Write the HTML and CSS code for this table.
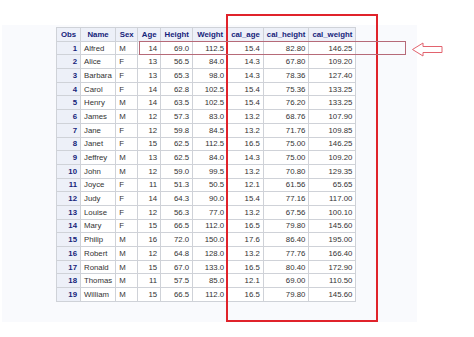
FILE: index.html
```html
<!DOCTYPE html>
<html lang="en">
<head>
  <meta charset="UTF-8">
  <title>SAS Output - Class</title>
  <link rel="stylesheet" href="styles.css">
</head>
<body>
  <div class="panel">
    <table class="sas-table">
      <thead>
        <tr>
          <th class="c-obs">Obs</th>
          <th class="c-name">Name</th>
          <th class="c-sex">Sex</th>
          <th class="c-age">Age</th>
          <th class="c-height">Height</th>
          <th class="c-weight">Weight</th>
          <th class="c-cage">cal_age</th>
          <th class="c-cheight">cal_height</th>
          <th class="c-cweight">cal_weight</th>
        </tr>
      </thead>
      <tbody id="rows"></tbody>
    </table>
  </div>

  <div class="red-box"></div>
  <div class="row-mark"></div>
  <svg class="arrow" width="34" height="18" viewBox="0 0 34 18">
    <polygon points="1.5,8.5 12,2 12,5.5 31,5.5 31,11.5 12,11.5 12,15" fill="#fff" stroke="#e2636e" stroke-width="1"/>
  </svg>

  <script>
    const data = [
      ["Alfred", "M", 14, "69.0", "112.5", "15.4", "82.80", "146.25"],
      ["Alice", "F", 13, "56.5", "84.0", "14.3", "67.80", "109.20"],
      ["Barbara", "F", 13, "65.3", "98.0", "14.3", "78.36", "127.40"],
      ["Carol", "F", 14, "62.8", "102.5", "15.4", "75.36", "133.25"],
      ["Henry", "M", 14, "63.5", "102.5", "15.4", "76.20", "133.25"],
      ["James", "M", 12, "57.3", "83.0", "13.2", "68.76", "107.90"],
      ["Jane", "F", 12, "59.8", "84.5", "13.2", "71.76", "109.85"],
      ["Janet", "F", 15, "62.5", "112.5", "16.5", "75.00", "146.25"],
      ["Jeffrey", "M", 13, "62.5", "84.0", "14.3", "75.00", "109.20"],
      ["John", "M", 12, "59.0", "99.5", "13.2", "70.80", "129.35"],
      ["Joyce", "F", 11, "51.3", "50.5", "12.1", "61.56", "65.65"],
      ["Judy", "F", 14, "64.3", "90.0", "15.4", "77.16", "117.00"],
      ["Louise", "F", 12, "56.3", "77.0", "13.2", "67.56", "100.10"],
      ["Mary", "F", 15, "66.5", "112.0", "16.5", "79.80", "145.60"],
      ["Philip", "M", 16, "72.0", "150.0", "17.6", "86.40", "195.00"],
      ["Robert", "M", 12, "64.8", "128.0", "13.2", "77.76", "166.40"],
      ["Ronald", "M", 15, "67.0", "133.0", "16.5", "80.40", "172.90"],
      ["Thomas", "M", 11, "57.5", "85.0", "12.1", "69.00", "110.50"],
      ["William", "M", 15, "66.5", "112.0", "16.5", "79.80", "145.60"]
    ];

    const tbody = document.getElementById("rows");
    data.forEach((row, i) => {
      const tr = document.createElement("tr");
      const obs = document.createElement("th");
      obs.className = "obs";
      obs.textContent = i + 1;
      tr.appendChild(obs);
      row.forEach((val, j) => {
        const td = document.createElement("td");
        td.textContent = val;
        if (j < 2) td.className = "txt";
        tr.appendChild(td);
      });
      tbody.appendChild(tr);
    });
  </script>
</body>
</html>
```

FILE: styles.css
```css
body {
  margin: 0;
  background-color: #ffffff;
  font-family: 'Liberation Sans', Arial, sans-serif;
  position: relative;
  width: 474px;
  height: 337px;
  overflow: hidden;
}

.panel {
  margin: 25px 0 0 2px;
  width: 415px;
  height: 297px;
  background-color: #f9fafd;
  padding: 2px 0 0 54px;
  box-sizing: border-box;
}

.sas-table {
  border-collapse: collapse;
  table-layout: fixed;
  font-size: 7.8px;
  background-color: #ffffff;
}

.sas-table th,
.sas-table td {
  border: 1px solid #cfd2d8;
  height: 13.7px;
  padding: 0 3px;
  box-sizing: border-box;
  white-space: nowrap;
  overflow: hidden;
}

.sas-table thead th {
  background-color: #edf0f8;
  color: #15237a;
  font-weight: bold;
  text-align: center;
}

.sas-table th.obs {
  background-color: #edf0f8;
  color: #15237a;
  font-weight: bold;
  text-align: right;
}

.sas-table td {
  color: #333333;
  text-align: right;
}

.sas-table td.txt {
  text-align: left;
}

.c-obs { width: 24px; }
.c-name { width: 35px; }
.c-sex { width: 22px; }
.c-age { width: 23px; }
.c-height { width: 32px; }
.c-weight { width: 35px; }
.c-cage { width: 35px; }
.c-cheight { width: 45px; }
.c-cweight { width: 47px; }

.red-box {
  position: absolute;
  left: 226px;
  top: 14px;
  width: 152px;
  height: 308px;
  border: 2px solid #e0232b;
  box-sizing: border-box;
}

.row-mark {
  position: absolute;
  left: 139px;
  top: 41px;
  width: 267px;
  height: 14px;
  border: 1px solid #b66a78;
  box-sizing: border-box;
}

.arrow {
  position: absolute;
  left: 411px;
  top: 41px;
}
```
